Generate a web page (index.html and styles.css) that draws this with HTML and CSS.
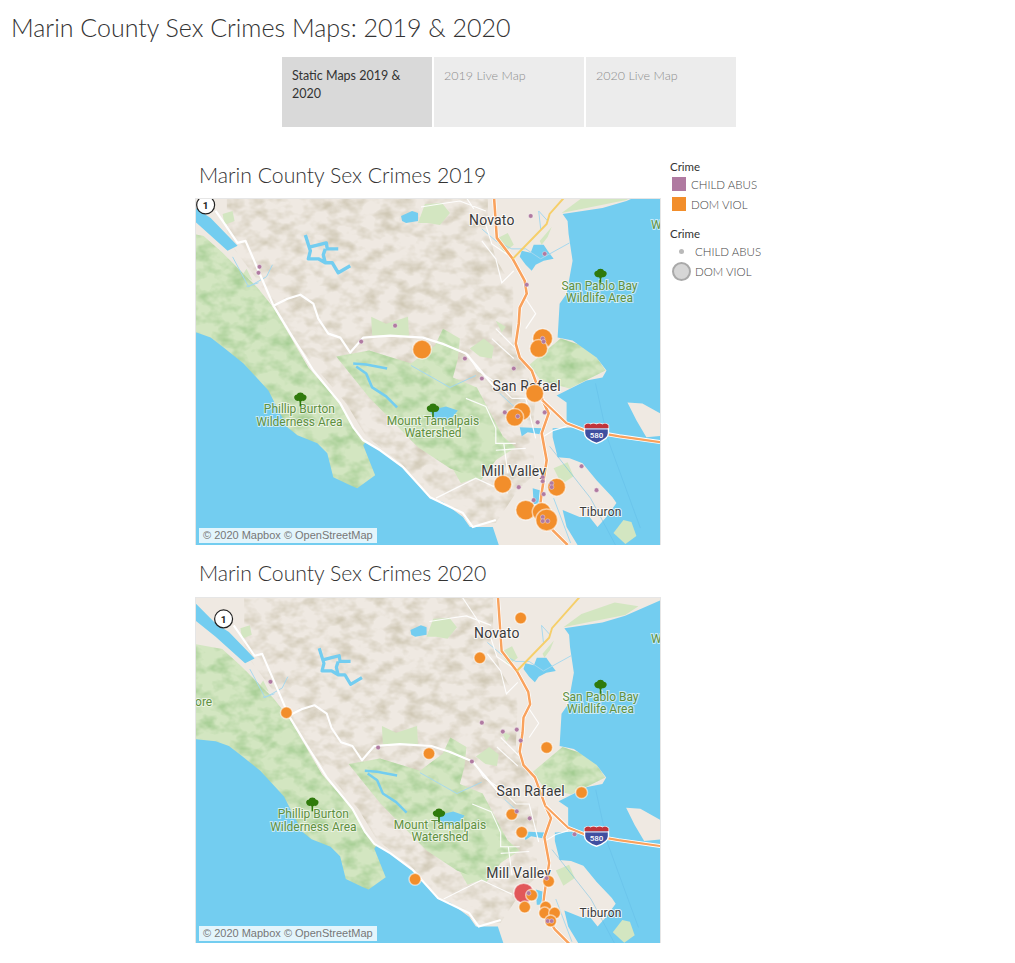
FILE: index.html
```html
<!DOCTYPE html>
<html lang="en">
<head>
    <meta charset="UTF-8">
    <meta name="viewport" content="width=device-width, initial-scale=1.0">
    <title>Marin County Sex Crimes Maps: 2019 &amp; 2020</title>
    <link rel="stylesheet" href="styles.css">
</head>
<body>
<h1 class="page-title">Marin County Sex Crimes Maps: 2019 &amp; 2020</h1>

<div class="tabs">
    <div class="tab active">Static Maps 2019 &amp; 2020</div>
    <div class="tab">2019 Live Map</div>
    <div class="tab">2020 Live Map</div>
</div>

<div class="dashboard">
    <div class="maps">
        <h2 class="map-title first">Marin County Sex Crimes 2019</h2>
        <div class="map">
            <svg class="map-svg" viewBox="0 0 464 347">
                <defs>
                    <filter id="hills" x="0" y="0" width="100%" height="100%">
                        <feTurbulence type="fractalNoise" baseFrequency="0.055 0.08" numOctaves="3" seed="7"/>
                        <feColorMatrix values="0 0 0 0 0.6  0 0 0 0 0.55  0 0 0 0 0.43  2 0 0 0 -0.82"/>
                    </filter>
                    <filter id="greens" x="0" y="0" width="100%" height="100%">
                        <feTurbulence type="fractalNoise" baseFrequency="0.06 0.08" numOctaves="3" seed="21"/>
                        <feColorMatrix values="0 0 0 0 0.36  0 0 0 0 0.6  0 0 0 0 0.28  2 0 0 0 -0.82"/>
                    </filter>
                    <clipPath id="hill-clip">
                        <path d="M30 -30L292 -30L292 30L300 60L318 90L316 140L330 170L340 200L336 240L340 275L322 292L300 325L275 326L262 314L232 294L205 265L170 238L150 205L120 170L90 130L60 80L30 40Z"/>
                    </clipPath>
                    <clipPath id="green-clip">
                        <path d="M-30 30L7 37L27 55L61 89L77 109L112 169L144 205L157 229L167 242L184 252L207 269L234 299L200 300L140 290L80 230L40 170L-30 140Z"/>
                        <path d="M140 158L173 152L215 165L239 147L247 130L264 140L262 160L257 179L281 189L307 238L320 249L300 262L285 282L254 270L222 249L173 199Z"/>
                        <path d="M365 140L395 150L410 172L374 190L345 182L334 166Z"/>
                        <path d="M428 320L441 328L441 342L425 347L418 335Z"/>
                    </clipPath>
                    <symbol id="shield" viewBox="0 0 26 20" overflow="visible">
                        <path d="M1 2Q4 -1 7 1.2Q10 -1 13 1.2Q16 -1 19 1.2Q22 -1 25 2L25 10Q25 16 13 20Q1 16 1 10Z" fill="#3f4fa0" stroke="#fff" stroke-width="1.4"/>
                        <path d="M1 2Q4 -1 7 1.2Q10 -1 13 1.2Q16 -1 19 1.2Q22 -1 25 2L25 5L1 5Z" fill="#c0343a"/>
                        <path d="M1 5.6L25 5.6" stroke="#fff" stroke-width="1"/>
                        <text x="13" y="14.5" class="shield-num">580</text>
                    </symbol>
                    <symbol id="tree" viewBox="0 0 14 14" overflow="visible">
                        <path d="M6.2 8L6.2 14L7.8 14L7.8 8Z" fill="#2f7a0c"/>
                        <path d="M7 0Q10 0 10.5 2Q14 3 13 6Q12 9 9 8.4Q7 10 5 8.4Q2 9 1 6Q0 3 3.5 2Q4 0 7 0Z" fill="#2f7a0c"/>
                    </symbol>
                    <g id="geo">
                        <rect x="-30" y="-30" width="530" height="400" fill="#efe9e2"/>
                        <!-- hillshade -->
                        <g clip-path="url(#hill-clip)">
                            <rect x="-30" y="-30" width="530" height="400" filter="url(#hills)"/>
                        </g>
                        <!-- parks -->
                        <path class="park" d="M-30 30L7 37L27 55L61 89L77 109L112 169L144 205L157 229L167 242L184 252L207 269L234 299L200 300L140 290L80 230L40 170L-30 140Z"/>
                        <path class="park" d="M140 158L173 152L215 165L239 147L247 130L264 140L262 160L257 179L281 189L307 238L320 249L300 262L285 282L254 270L222 249L173 199Z"/>
                        <path class="park" d="M365 140L395 150L410 172L374 190L345 182L334 166Z"/>
                        <path class="park" d="M229 5L246 4L254 14L244 26L232 24L222 24Z"/>
                        <path class="park" d="M175 118L190 125L212 118L213 139L196 137L176 137Z"/>
                        <path class="park" d="M300 40L312 34L318 46L308 54ZM344 42L356 28L352 38L346 46Z"/>
                        <path class="park" d="M288 140L298 148L296 160L284 158L274 150ZM300 122L310 128L306 134Z"/>
                        <path class="park" d="M252 262L276 252L298 268L285 278L265 285Z"/>
                        <path class="park" d="M26 15L36 12L38 22L28 26ZM50 70L56 82L46 76Z"/>
                        <path class="park" d="M366 14L396 8L431 1L445 -8L420 -12L385 0Z"/>
                        <path class="park" d="M358 270L372 264L378 278L366 286Z"/>
                        <g clip-path="url(#green-clip)">
                            <rect x="-30" y="-30" width="530" height="400" filter="url(#greens)"/>
                        </g>
                        <!-- water -->
                        <path class="water" d="M-40 130L0 134L14 139L27 149L47 165L72 192L77 202L91 229L101 237L121 245L131 255L137 279L154 287L161 290L179 277L167 247L170 243L184 252L207 270L234 300L247 304L267 319L274 329L297 329L304 350L-40 370Z"/>
                        <path class="water" d="M-30 -20L0 10L14 19L41 47L31 52L0 24L-30 0Z"/>
                        <path class="water" d="M490 -24L431 2L407 9L367 15L372 22L373 35L377 62L371 95L364 105L362 139L377 142L401 159L411 172L407 179L391 182L371 192L361 197L371 204L371 225L382 229L357 230L357 239L362 259L374 260L387 265L401 282L417 299L421 305L410 320L402 329L394 319L384 319L367 312L371 329L382 347L470 360L510 -24Z"/>
                        <path class="water" d="M205 17L216 12L222 14L222 22L210 24L206 22Z"/>
                        <path class="water" d="M326 52L335 54L338 46L348 46L352 52L358 60L348 62L340 66L336 72L330 66L324 58Z"/>
                        <path class="water" d="M324 229L346 230L344 236L332 234L326 238ZM337 290L344 292L344 306L338 306Z"/>
                        <path class="water" d="M233 212L250 208L262 212L254 222L240 222L236 216Z"/>
                        <path class="water-line" d="M109 36L114 52L112 60L122 60L129 64L136 64L142 74L154 67M114 48L122 46L130 44L131 50L142 50M129 50L127 56L129 64"/>
                        <path class="water-line thin" d="M157 165L170 166L191 170M160 168L170 175L176 189L190 198L201 209"/>
                        <path class="stream" d="M36 58L52 88L70 78L76 66M50 88L62 84M345 30L343 12L352 22M286 30L300 42L316 50L330 50L345 60L374 44M215 167L254 189L280 177M304 195L318 208M358 300L375 345"/>
                        <path class="channel" d="M400 185L412 240L445 330M354 248L395 300L420 347"/>
                        <!-- land on the far side of the bay -->
                        <path class="land" d="M432 204L447 205L470 218L470 237L451 239L441 222ZM470 120L480 110L490 130L480 140Z"/>
                        <path class="park" d="M418 335L428 322L436 324L441 338L430 346Z"/>
                        <!-- roads -->
                        <path class="minor" d="M246 145L258 150L272 156L282 172L300 184L316 200M286 42L300 60L306 84L318 72M225 8L250 4L264 2L290 12M258 -20L278 10M330 100L340 115L330 130M270 200L290 208L300 230L300 245L320 245M308 245L312 275M240 300L280 280L312 295M345 240L358 232L371 228M316 200L330 200L340 240M300 130L320 150M288 20L296 45L312 56M300 252L330 250M296 140L318 160M320 275L340 270L350 285"/>
                        <path class="casing" d="M19 12L26 22L41 44L49 42L62 72L77 107L94 135L117 172L144 205L157 229L167 242L184 252L207 269L234 299L267 315L277 329L300 322"/>
                        <path class="casing" d="M77 107L91 100L104 96L117 105L122 120L132 135L144 139L154 154L167 139L194 137L227 139L246 145L270 155L300 190"/>
                        <path class="highway-case" d="M297 -20L301 39L317 60L329 82L331 95L324 109L323 125L320 145L324 159L336 172L347 202L353 215L346 235L351 262L346 295L344 312L357 332L372 347"/>
                        <path class="highway" d="M297 -20L301 39L317 60L329 82L331 95L324 109L323 125L320 145L324 159L336 172L347 202L353 215L346 235L351 262L346 295L344 312L357 332L372 347"/>
                        <path class="highway-case" d="M347 202L371 225L389 232L424 238L480 246"/>
                        <path class="highway thin" d="M347 202L371 225L389 232L424 238L480 246"/>
                        <path class="yellow" d="M317 60L351 25L354 15L385 -20"/>
                    </g>
                </defs>
                <use href="#geo"/>
                <g>
                    <text class="city" x="296" y="26">Novato</text>
                    <text class="city" x="331" y="193">San Rafael</text>
                    <text class="city" x="318" y="278">Mill Valley</text>
                    <text class="city small" x="405" y="318">Tiburon</text>
                    <text class="park-name" x="404" y="91">San Pablo Bay<tspan x="404" dy="12">Wildlife Area</tspan></text>
                    <text class="park-name" x="103" y="215">Phillip Burton<tspan x="103" dy="13">Wilderness Area</tspan></text>
                    <text class="park-name" x="237" y="227">Mount Tamalpais<tspan x="237" dy="12">Watershed</tspan></text>
                    <text class="park-name" x="461" y="30">W</text>
                    <use href="#tree" x="398" y="70" width="14" height="14"/>
                    <use href="#tree" x="97" y="194" width="14" height="14"/>
                    <use href="#tree" x="230" y="205" width="14" height="14"/>
                    <use href="#shield" x="388" y="225" width="26" height="20"/>
                    <g class="route"><circle cx="9" cy="6" r="9"/><text x="9" y="10">1</text></g>
                </g>
                <g class="marks">
                    <circle class="dom" cx="226" cy="151" r="9.5"/>
                    <circle class="dom" cx="347" cy="140" r="10"/>
                    <circle class="dom" cx="343" cy="150" r="9"/>
                    <circle class="dom" cx="339" cy="195" r="9"/>
                    <circle class="dom" cx="326" cy="213" r="9"/>
                    <circle class="dom" cx="319" cy="219" r="9"/>
                    <circle class="dom" cx="307" cy="286" r="9"/>
                    <circle class="dom" cx="361" cy="289" r="9"/>
                    <circle class="dom" cx="330" cy="312" r="10"/>
                    <circle class="dom" cx="346" cy="314" r="9.5"/>
                    <circle class="dom" cx="351" cy="322" r="11"/>
                    <circle class="child" cx="63" cy="68" r="2.3"/>
                    <circle class="child" cx="62" cy="74" r="2.3"/>
                    <circle class="child" cx="199" cy="127" r="2.3"/>
                    <circle class="child" cx="165" cy="143" r="2.3"/>
                    <circle class="child" cx="335" cy="17" r="2.3"/>
                    <circle class="child" cx="349" cy="55" r="2.3"/>
                    <circle class="child" cx="331" cy="86" r="2.3"/>
                    <circle class="child" cx="269" cy="160" r="2.3"/>
                    <circle class="child" cx="318" cy="170" r="2.3"/>
                    <circle class="child" cx="347" cy="140" r="2.3"/>
                    <circle class="child" cx="348" cy="143" r="2.3"/>
                    <circle class="child" cx="286" cy="180" r="2.3"/>
                    <circle class="child" cx="309" cy="214" r="2.3"/>
                    <circle class="child" cx="349" cy="214" r="2.3"/>
                    <circle class="child" cx="342" cy="224" r="2.3"/>
                    <circle class="child" cx="322" cy="218" r="2.3"/>
                    <circle class="child" cx="386" cy="268" r="2.3"/>
                    <circle class="child" cx="401" cy="292" r="2.3"/>
                    <circle class="child" cx="323" cy="289" r="2.3"/>
                    <circle class="child" cx="347" cy="279" r="2.3"/>
                    <circle class="child" cx="347" cy="283" r="2.3"/>
                    <circle class="child" cx="356" cy="285" r="2.3"/>
                    <circle class="child" cx="356" cy="289" r="2.3"/>
                    <circle class="child" cx="348" cy="296" r="2.3"/>
                    <circle class="child" cx="338" cy="302" r="2.3"/>
                    <circle class="child" cx="347" cy="319" r="2.3"/>
                    <circle class="child" cx="347" cy="323" r="2.3"/>
                    <circle class="child" cx="352" cy="323" r="2.3"/>
                </g>
            </svg>
            <div class="credit">© 2020 Mapbox © OpenStreetMap</div>
        </div>

        <h2 class="map-title">Marin County Sex Crimes 2020</h2>
        <div class="map second">
            <svg class="map-svg" viewBox="0 0 464 346">
                <use href="#geo" transform="translate(19 16) scale(.953)"/>
                <g>
                    <text class="city" x="301" y="40">Novato</text>
                    <text class="city" x="335" y="199">San Rafael</text>
                    <text class="city" x="323" y="281">Mill Valley</text>
                    <text class="city small" x="405" y="320">Tiburon</text>
                    <text class="park-name" x="405" y="103">San Pablo Bay<tspan x="405" dy="12">Wildlife Area</tspan></text>
                    <text class="park-name" x="117" y="221">Phillip Burton<tspan x="117" dy="13">Wilderness Area</tspan></text>
                    <text class="park-name" x="244" y="232">Mount Tamalpais<tspan x="244" dy="12">Watershed</tspan></text>
                    <text class="park-name" x="7" y="108">ore</text>
                    <text class="park-name" x="461" y="45">W</text>
                    <use href="#tree" x="398" y="82" width="14" height="14"/>
                    <use href="#tree" x="109" y="200" width="14" height="14"/>
                    <use href="#tree" x="236" y="211" width="14" height="14"/>
                    <use href="#shield" x="388" y="229" width="26" height="20"/>
                    <g class="route"><circle cx="27" cy="21" r="9"/><text x="27" y="25">1</text></g>
                </g>
                <g class="marks">
                    <circle class="red" cx="328" cy="296" r="10"/>
                    <circle class="dom" cx="90" cy="115" r="6"/>
                    <circle class="dom" cx="325" cy="20" r="6"/>
                    <circle class="dom" cx="284" cy="60" r="6"/>
                    <circle class="dom" cx="233" cy="156" r="6"/>
                    <circle class="dom" cx="351" cy="150" r="6"/>
                    <circle class="dom" cx="386" cy="195" r="6"/>
                    <circle class="dom" cx="316" cy="217" r="6"/>
                    <circle class="dom" cx="326" cy="235" r="6"/>
                    <circle class="dom" cx="353" cy="284" r="6"/>
                    <circle class="dom" cx="336" cy="298" r="6"/>
                    <circle class="dom" cx="329" cy="310" r="6"/>
                    <circle class="dom" cx="350" cy="310" r="6"/>
                    <circle class="dom" cx="349" cy="316" r="6"/>
                    <circle class="dom" cx="359" cy="316" r="6"/>
                    <circle class="dom" cx="355" cy="324" r="6"/>
                    <circle class="dom" cx="219" cy="282" r="6"/>
                    <circle class="child" cx="74" cy="84" r="2.3"/>
                    <circle class="child" cx="182" cy="150" r="2.3"/>
                    <circle class="child" cx="321" cy="214" r="2.3"/>
                    <circle class="child" cx="334" cy="221" r="2.3"/>
                    <circle class="child" cx="379" cy="237" r="2.3"/>
                    <circle class="child" cx="351" cy="281" r="2.3"/>
                    <circle class="child" cx="333" cy="296" r="2.3"/>
                    <circle class="child" cx="352" cy="324" r="2.3"/>
                    <circle class="child" cx="356" cy="324" r="2.3"/>
                    <circle class="child" cx="286" cy="125" r="2.3"/>
                    <circle class="child" cx="307" cy="134" r="2.3"/>
                    <circle class="child" cx="321" cy="132" r="2.3"/>
                    <circle class="child" cx="325" cy="143" r="2.3"/>
                    <circle class="child" cx="276" cy="164" r="2.3"/>
                </g>
            </svg>
            <div class="credit">© 2020 Mapbox © OpenStreetMap</div>
        </div>
    </div>

    <div class="legends">
        <div class="legend">
            <div class="legend-title">Crime</div>
            <div class="legend-row"><span class="swatch purple"></span>CHILD ABUS</div>
            <div class="legend-row"><span class="swatch orange"></span>DOM VIOL</div>
        </div>
        <div class="legend">
            <div class="legend-title">Crime</div>
            <div class="legend-row size"><span class="size-key"><span class="size-dot"></span></span>CHILD ABUS</div>
            <div class="legend-row size"><span class="size-key"><span class="size-big"></span></span>DOM VIOL</div>
        </div>
    </div>
</div>
</body>
</html>
```

FILE: styles.css
```css
body {
    margin: 0;
    background-color: #fff;
    font-family: "Lato", "Open Sans", sans-serif;
    color: #333;
}
.page-title {
    margin: 0;
    padding: 12px 0 0 11px;
    font-size: 25px;
    font-weight: 300;
    line-height: 30px;
    color: #333;
}
.tabs {
    display: flex;
    gap: 2px;
    margin: 15px 0 0 282px;
}
.tab {
    width: 150px;
    height: 70px;
    box-sizing: border-box;
    padding: 10px;
    background-color: #ececec;
    color: #8c8c8c;
    font-size: 12.5px;
    font-weight: 300;
    line-height: 18px;
}
.tab.active {
    background-color: #d9d9d9;
    color: #333;
    font-weight: 400;
}
.dashboard {
    display: flex;
    margin: 30px 0 0 195px;
}
.maps {
    width: 466px;
}
.map-title {
    margin: 0;
    height: 52px;
    box-sizing: border-box;
    padding: 13px 0 0 4px;
    font-size: 21.2px;
    font-weight: 300;
    line-height: 30px;
    color: #333;
}
.map-title.first {
    height: 41px;
    padding-top: 3px;
}
.map {
    position: relative;
    height: 347px;
    box-sizing: border-box;
    border: 1px solid #e6e6e6;
    border-bottom: 0;
    overflow: hidden;
}
.map.second {
    height: 346px;
}
.map-svg {
    display: block;
    width: 464px;
    height: 100%;
}
.credit {
    position: absolute;
    left: 3px;
    bottom: 2px;
    padding: 0 4px;
    background: rgba(255, 255, 255, 0.8);
    font-family: "Liberation Sans", sans-serif;
    font-size: 11px;
    line-height: 15px;
    color: #777;
}

/* map layers */
.park { fill: #d3e6c1; }
.land { fill: #efe9e2; }
.water { fill: #73cdf0; }
.water-line {
    fill: none;
    stroke: #73cdf0;
    stroke-width: 3.4;
    stroke-linejoin: round;
}
.water-line.thin {
    stroke-width: 2.6;
}
.stream {
    fill: none;
    stroke: #a5d8ee;
    stroke-width: 1;
}
.channel {
    fill: none;
    stroke: #62bce6;
    stroke-width: 1;
    opacity: 0.5;
}
.minor {
    fill: none;
    stroke: #fff;
    stroke-width: 1.2;
    opacity: 0.9;
}
.casing {
    fill: none;
    stroke: #fff;
    stroke-width: 2.2;
    stroke-linejoin: round;
}
.highway-case {
    fill: none;
    stroke: #fff;
    stroke-width: 4;
}
.highway {
    fill: none;
    stroke: #f9a25d;
    stroke-width: 2.6;
    stroke-linejoin: round;
}
.highway.thin {
    stroke-width: 2.2;
}
.yellow {
    fill: none;
    stroke: #f6cf6a;
    stroke-width: 2;
}
.city {
    font-family: "Roboto", sans-serif;
    font-size: 14px;
    letter-spacing: 0.2px;
    fill: #3a3a3a;
    text-anchor: middle;
    stroke: rgba(255, 255, 255, 0.75);
    stroke-width: 2px;
    paint-order: stroke;
}
.city.small {
    font-size: 12px;
}
.park-name {
    font-family: "Roboto", sans-serif;
    font-size: 12px;
    fill: #5f9040;
    text-anchor: middle;
    stroke: rgba(255, 255, 255, 0.6);
    stroke-width: 2px;
    paint-order: stroke;
}
.shield-num {
    font-family: "Roboto", sans-serif;
    font-size: 8px;
    font-weight: 500;
    fill: #fff;
    text-anchor: middle;
}
.route circle {
    fill: #fff;
    stroke: #222;
    stroke-width: 1.2;
}
.route text {
    font-family: "Roboto", sans-serif;
    font-size: 10px;
    font-weight: 700;
    fill: #222;
    text-anchor: middle;
}
.dom {
    fill: #f28e2b;
    stroke: rgba(255, 255, 255, 0.55);
    stroke-width: 1.5;
}
.child {
    fill: #b07aa1;
    stroke: rgba(255, 255, 255, 0.35);
    stroke-width: 1;
}
.red {
    fill: #e15759;
    stroke: rgba(255, 255, 255, 0.55);
    stroke-width: 1.5;
}

/* legends */
.legends {
    display: flex;
    flex-direction: column;
    gap: 13px;
    padding: 3px 0 0 9px;
}
.legend-title {
    font-size: 11.5px;
    line-height: 14px;
    color: #333;
}
.legend-row {
    display: flex;
    align-items: center;
    gap: 5px;
    height: 20px;
    padding-left: 2px;
    font-size: 11.5px;
    font-weight: 300;
    color: #444;
}
.swatch {
    width: 14px;
    height: 14px;
}
.swatch.purple { background-color: #b07aa1; }
.swatch.orange { background-color: #f28e2b; }
.legend-row.size {
    gap: 4px;
}
.size-key {
    display: flex;
    justify-content: center;
    align-items: center;
    width: 19px;
    height: 20px;
}
.size-dot {
    width: 5px;
    height: 5px;
    border-radius: 50%;
    background-color: #b9b9b9;
}
.size-big {
    width: 15px;
    height: 15px;
    border: 2px solid #a9a9a9;
    border-radius: 50%;
    background-color: #d6d6d6;
}
```
